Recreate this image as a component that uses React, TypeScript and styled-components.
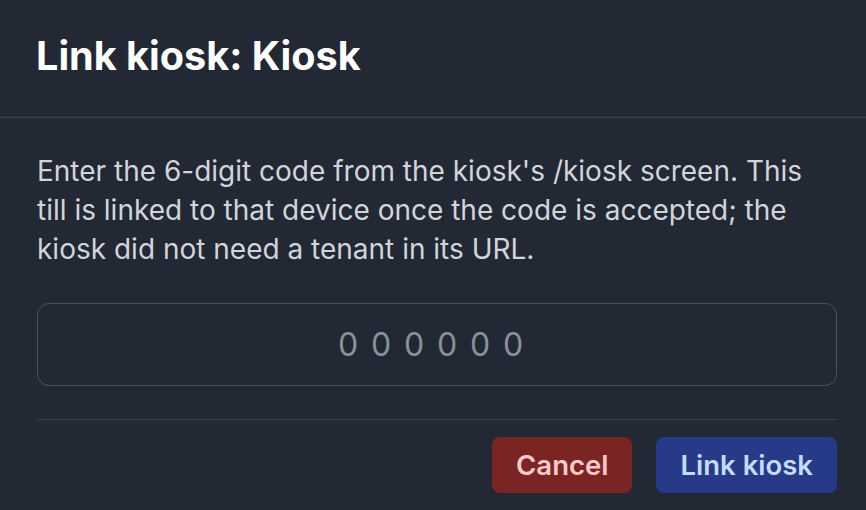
import React from "react";
import styled, { createGlobalStyle } from "styled-components";

const Global = createGlobalStyle`
  html, body {
    margin: 0;
    padding: 0;
    background: #222834;
    font-family: Inter, "Noto Sans", sans-serif;
  }
  * { box-sizing: border-box; }
`;

const Dialog = styled.div`
  width: 866px;
  height: 510px;
  background: #222834;
  display: flex;
  flex-direction: column;
  overflow: hidden;
`;

const Header = styled.div`
  padding: 32px 29px 37px 36px;
  border-bottom: 1px solid #3a404c;
`;

const Title = styled.h2`
  margin: 0;
  font-size: 39.6px;
  line-height: 48px;
  font-weight: 700;
  color: #ffffff;
`;

const Body = styled.div`
  padding: 34px 29px 0 37px;
  display: flex;
  flex-direction: column;
`;

const Description = styled.p`
  margin: 0;
  font-size: 28px;
  line-height: 39px;
  color: #d1d5db;
`;

const CodeInput = styled.input`
  margin-top: 34px;
  height: 83px;
  width: 100%;
  border: 1.5px solid #4b5261;
  border-radius: 12px;
  background: transparent;
  color: #e5e7eb;
  font-family: Inter, "Noto Sans", sans-serif;
  font-size: 32px;
  letter-spacing: 0.4em;
  text-align: center;
  outline: none;
  &::placeholder {
    color: #8b909b;
  }
`;

const Footer = styled.div`
  margin-top: 33px;
  border-top: 1px solid #3a404c;
  padding-top: 17px;
  display: flex;
  justify-content: flex-end;
  gap: 24px;
`;

const Button = styled.button<{ $tone: "danger" | "primary" }>`
  height: 56px;
  padding: 0 24px;
  border: none;
  border-radius: 8px;
  font-family: Inter, "Noto Sans", sans-serif;
  font-size: 27.5px;
  font-weight: 600;
  cursor: pointer;
  background: ${(p) => (p.$tone === "danger" ? "#7a2523" : "#263a88")};
  color: ${(p) => (p.$tone === "danger" ? "#fecaca" : "#c7dbfe")};
`;

export default function App() {
  return (
    <>
      <Global />
      <Dialog>
        <Header>
          <Title>Link kiosk: Kiosk</Title>
        </Header>
        <Body>
          <Description>
            Enter the 6-digit code from the kiosk's /kiosk screen. This till is
            linked to that device once the code is accepted; the kiosk did not
            need a tenant in its URL.
          </Description>
          <CodeInput placeholder="000000" inputMode="numeric" maxLength={6} />
          <Footer>
            <Button $tone="danger">Cancel</Button>
            <Button $tone="primary">Link kiosk</Button>
          </Footer>
        </Body>
      </Dialog>
    </>
  );
}
